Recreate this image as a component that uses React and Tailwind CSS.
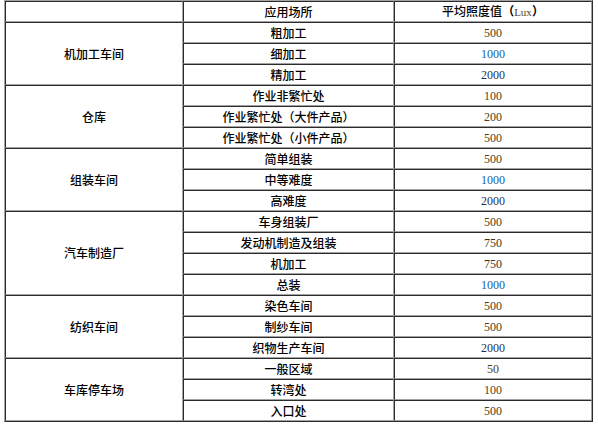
import React from "react";

const cn = "font-['Noto_Sans_CJK_SC',sans-serif] text-[12px] font-medium text-black";

const colors = {
  "50": "text-[#4d3a1a]",
  "100": "text-[#5a4020]",
  "200": "text-[#4d3a1a]",
  "500": "text-[#4d3a1a]",
  "750": "text-[#3d3020]",
  "1000": "text-[#17609e]",
  "2000": "text-[#1f2f4f]",
};

const groups = [
  {
    name: "机加工车间",
    rows: [
      ["粗加工", "500"],
      ["细加工", "1000"],
      ["精加工", "2000"],
    ],
  },
  {
    name: "仓库",
    rows: [
      ["作业非繁忙处", "100"],
      ["作业繁忙处（大件产品）", "200"],
      ["作业繁忙处（小件产品）", "500"],
    ],
  },
  {
    name: "组装车间",
    rows: [
      ["简单组装", "500"],
      ["中等难度", "1000"],
      ["高难度", "2000"],
    ],
  },
  {
    name: "汽车制造厂",
    rows: [
      ["车身组装厂", "500"],
      ["发动机制造及组装", "750"],
      ["机加工", "750"],
      ["总装", "1000"],
    ],
  },
  {
    name: "纺织车间",
    rows: [
      ["染色车间", "500"],
      ["制纱车间", "500"],
      ["织物生产车间", "2000"],
    ],
  },
  {
    name: "车库停车场",
    rows: [
      ["一般区域", "50"],
      ["转湾处", "100"],
      ["入口处", "500"],
    ],
  },
];

// inset cell borders: dark top/left, light bottom/right
const cell =
  "border-t border-l border-b border-r border-t-[#2b2b2b] border-l-[#2b2b2b] border-b-[#a3a3a3] border-r-[#a3a3a3] p-0 text-center align-middle leading-none";

export default function App() {
  return (
    <div className="bg-white w-[598px] h-[425px]">
      <table className="ml-[4px] w-[589px] border-separate border-spacing-0 border border-t-[#a3a3a3] border-l-[#a3a3a3] border-b-[#2b2b2b] border-r-[#2b2b2b] table-fixed">
        <colgroup>
          <col className="w-[178px]" />
          <col className="w-[211px]" />
          <col />
        </colgroup>
        <tbody>
          <tr className="h-[21px]">
            <td className={cell}></td>
            <td className={`${cell} ${cn}`}>应用场所</td>
            <td className={`${cell} ${cn}`}>
              平均照度值<span className="font-bold">（</span>
              <span className="font-['Liberation_Serif',serif] text-[11px] font-normal text-[#5a4020]">Lux</span>
              <span className="font-bold">）</span>
            </td>
          </tr>
          {groups.map((g) =>
            g.rows.map(([place, lux], i) => (
              <tr key={g.name + place} className="h-[21px]">
                {i === 0 && (
                  <td rowSpan={g.rows.length} className={`${cell} ${cn}`}>
                    {g.name}
                  </td>
                )}
                <td className={`${cell} ${cn}`}>{place}</td>
                <td className={`${cell} font-['Liberation_Serif',serif] text-[12px] ${colors[lux]}`}>
                  {lux}
                </td>
              </tr>
            ))
          )}
        </tbody>
      </table>
    </div>
  );
}
